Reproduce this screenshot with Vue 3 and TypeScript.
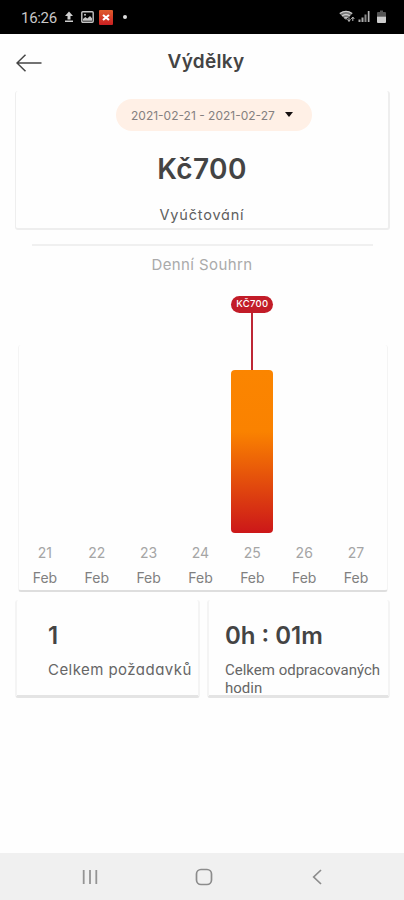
<script setup lang="ts">
interface Day {
  day: number
  month: string
  height: number
  label?: string
}

const days: Day[] = [
  { day: 21, month: 'Feb', height: 0 },
  { day: 22, month: 'Feb', height: 0 },
  { day: 23, month: 'Feb', height: 0 },
  { day: 24, month: 'Feb', height: 0 },
  { day: 25, month: 'Feb', height: 163, label: 'KČ700' },
  { day: 26, month: 'Feb', height: 0 },
  { day: 27, month: 'Feb', height: 0 },
]
</script>

<template>
  <div class="screen">
    <div class="status">
      <span class="time">16:26</span>
      <svg class="s-upload" width="10" height="12" viewBox="0 0 10 12"><path d="M5 0.5 9 5H6.5V8.500H3.500V5H1ZM1 9.500h8v1.500H1z" fill="#cfcfcf" /></svg>
      <svg class="s-image" width="13" height="12" viewBox="0 0 13 12">
        <rect x="0.800" y="0.800" width="11.400" height="10.400" rx="1" fill="none" stroke="#c4c4c4" stroke-width="1.400" />
        <path d="M2 9.800V8l2.300-2 2 1.500L9 5l2 2.300v2.500z" fill="#c4c4c4" />
        <circle cx="4" cy="3.700" r="1" fill="#c4c4c4" />
      </svg>
      <svg class="s-app" width="14" height="15" viewBox="0 0 14 15">
        <defs><linearGradient id="badge-fill" x2="0" y2="1"><stop stop-color="#df5c2c" /><stop offset="1" stop-color="#c91f22" /></linearGradient></defs>
        <rect width="14" height="15" rx="1" fill="url(#badge-fill)" />
        <path d="M4 5l6 5M10 5l-6 5" stroke="#fff" stroke-width="2.200" />
      </svg>
      <i class="s-dot"></i>
      <svg class="s-right" width="48" height="14" viewBox="0 0 48 14">
        <path d="M0.500 3.500Q7 -1.500 13.500 3.500L7 10Z" fill="#777" />
        <path d="M0.800 3.600Q7 -1 13.200 3.600M3 6q4-3 8 0M5.300 8.200q1.700-1.200 3.400 0" fill="none" stroke="#ccc" stroke-width="1.300" />
        <path d="M10 8v4M13.500 7v4" stroke="#000" stroke-width="3.500" />
        <path d="M10 7.500v3.700M8.500 9.300 10 11.500 11.500 9.300M13.800 11V7.500M12.300 9 13.800 7 15.300 9" fill="none" stroke="#bbb" stroke-width="1" />
        <path d="M19.500 9.500h2V12h-2zM22.500 7.500h2V12h-2z" fill="#aaa" />
        <path d="M25.500 4.500h2V12h-2z" fill="#888" /><path d="M28.800 1h1.700v11h-1.700z" fill="#b5b5b5" />
        <path d="M39 2h2V0.500h3V2h2q1 0 1 1v3.500h-9V3q0-1 1-1z" fill="#555" />
        <path d="M38 6.500h9V12q0 1-1 1h-7q-1 0-1-1z" fill="#ccc" />
      </svg>
    </div>

    <header class="header">
      <svg class="back" width="26" height="18" viewBox="0 0 26 18"><path d="M25.500 9H1M9.500 0.800 1 9l8.500 8.200" fill="none" stroke="#454545" stroke-width="1.500" /></svg>
      <h1 class="title">Výdělky</h1>
    </header>

    <section class="summary">
      <div class="range"><span class="range-text">2021-02-21 - 2021-02-27</span><i class="caret"></i></div>
      <div class="amount">Kč700</div>
      <div class="caption">Vyúčtování</div>
    </section>

    <div class="divider"></div>
    <h2 class="subtitle"><span>Denní Souhrn</span></h2>

    <section class="chart">
      <div v-for="d in days" :key="d.day" class="col">
        <template v-if="d.label">
          <div class="tag"><span>{{ d.label }}</span></div>
          <div class="stem"></div>
          <div class="bar" :style="{ height: d.height + 'px' }"></div>
        </template>
        <span class="day">{{ d.day }}</span>
        <span class="month">{{ d.month }}</span>
      </div>
    </section>

    <section class="totals">
      <div class="card first">
        <div class="value">1</div>
        <div class="note">Celkem požadavků</div>
      </div>
      <div class="card second">
        <div class="value">0h : 01m</div>
        <div class="note">Celkem odpracovaných hodin</div>
      </div>
    </section>

    <nav class="nav">
      <svg width="16" height="16" viewBox="0 0 16 16"><path d="M1.700 1v14M8 1v14M14.300 1v14" stroke="#949494" stroke-width="1.800" /></svg>
      <svg width="18" height="18" viewBox="0 0 18 18"><rect x="1.500" y="1.500" width="15" height="15" rx="4.500" fill="none" stroke="#8c8c8c" stroke-width="1.700" /></svg>
      <svg width="10" height="16" viewBox="0 0 10 16"><path d="M9 1 1.700 8 9 15" fill="none" stroke="#8c8c8c" stroke-width="1.700" /></svg>
    </nav>
  </div>
</template>

<style>
body { background: #fefefe; }
</style>

<style scoped>
.screen {
  width: 404px;
  height: 900px;
  display: flex;
  flex-direction: column;
  overflow: hidden;
  background: #fefefe;
  color: #444;
  font-family: Inter, "Noto Sans", sans-serif;
  font-feature-settings: "cv11";
}
.status {
  height: 34px;
  flex: none;
  box-sizing: border-box;
  padding: 0 17px 0 21px;
  display: flex;
  align-items: center;
  background: #000;
}
.time { width: 42px; font: 15px/34px Roboto, sans-serif; color: #c8c8c8; letter-spacing: -0.3px; padding-top: 2px; }
.s-upload { margin-left: 1px; }
.s-image { margin-left: 7px; }
.s-app { margin-left: 5px; }
.s-dot { width: 4px; height: 4px; margin-left: 10px; border-radius: 50%; background: #ddd; }
.s-right { margin-left: auto; }
.header {
  height: 57px;
  flex: none;
  box-sizing: border-box;
  padding: 0 16px 2px;
  display: grid;
  grid-template-columns: 30px 1fr 22px;
  align-items: center;
}
.back { margin-top: 2px; }
.title { margin: 0; text-align: center; font-size: 19px; line-height: 28px; font-weight: 600; letter-spacing: 0.3px; }
.summary {
  height: 139px;
  flex: none;
  box-sizing: border-box;
  margin: 0 14px 0 15px;
  padding-top: 8px;
  display: flex;
  flex-direction: column;
  align-items: center;
  border: solid #eee;
  border-width: 0 2px 2px 1px;
  border-radius: 3px;
}
.range {
  width: 196px;
  height: 32px;
  box-sizing: border-box;
  padding: 0 19px 0 15px;
  display: flex;
  align-items: center;
  justify-content: space-between;
  margin-left: 24px;
  border-radius: 16px;
  background: #fff0e6;
}
.range-text { font-size: 12px; color: #858080; white-space: nowrap; }
.caret { border: solid transparent; border-width: 5px 4px 0; border-top-color: #151010; margin-top: -2px; }
.amount { margin-top: 20px; font-size: 28px; line-height: 36px; font-weight: 600; letter-spacing: 0.4px; }
.caption { margin-top: 18px; font-size: 14.500px; line-height: 20px; color: #606060; letter-spacing: 0.8px; }
.divider { width: 341px; height: 2px; flex: none; margin: 14px 0 0 32px; background: #f0f0f0; }
.subtitle { margin: 7px 0 0; height: 24px; text-align: center; font-size: 15px; line-height: 24px; font-weight: 400; color: #aaa; letter-spacing: 0.4px; }
.chart {
  width: 370px;
  height: 247px;
  flex: none;
  box-sizing: border-box;
  margin: 68px 0 0 18px;
  padding: 0 5px 0 0;
  display: grid;
  grid-template-columns: repeat(7, 1fr);
  border: solid #f4f4f4;
  border-width: 0 1px 2px;
  border-bottom-color: #dedede;
  border-radius: 3px;
}
.col { min-height: 0; display: flex; flex-direction: column; align-items: center; justify-content: flex-end; }
.tag {
  width: 42px;
  height: 17px;
  flex: none;
  border-radius: 9px;
  background: #c21c28;
  color: #fff;
  text-align: center;
  font-size: 9.5px;
  line-height: 16px;
  font-weight: 500;
  letter-spacing: 0.3px;
}
.stem { width: 2px; height: 57px; flex: none; background: #bd2735; }
.bar { width: 42px; flex: none; border-radius: 4px; background: linear-gradient(#fb8500 0%, #fa8200 38%, #cc1719 100%); }
.day { margin-top: 8px; font-size: 14px; line-height: 24px; color: #a5a5a5; }
.month { font-size: 14px; line-height: 25px; color: #808080; }
.totals {
  display: grid;
  grid-template-columns: 185px 183px;
  gap: 7px;
  margin: 8px 0 0 15px;
  flex: none;
}
.card {
  height: 98px;
  box-sizing: border-box;
  padding-top: 21px;
  border: solid #f4f4f4;
  border-width: 0 2px 3px;
  border-bottom-color: #e4e4e4;
  border-radius: 3px;
  white-space: nowrap;
}
.first { padding-left: 31px; }
.second { padding-left: 16px; }
.value { font-size: 24px; line-height: 30px; font-weight: 600; }
.note { margin-top: 9px; font-size: 15px; line-height: 20px; color: #666; letter-spacing: 0.45px; }
.second .note { width: 160px; white-space: normal; font: 15px/18px Roboto, sans-serif; letter-spacing: 0; margin-top: 10px; }
.nav {
  height: 47px;
  flex: none;
  box-sizing: border-box;
  margin-top: auto;
  padding: 0 82px 0 82px;
  display: grid;
  grid-template-columns: 113px 1fr auto;
  align-items: center;
  background: #f0f0f0;
}
</style>
